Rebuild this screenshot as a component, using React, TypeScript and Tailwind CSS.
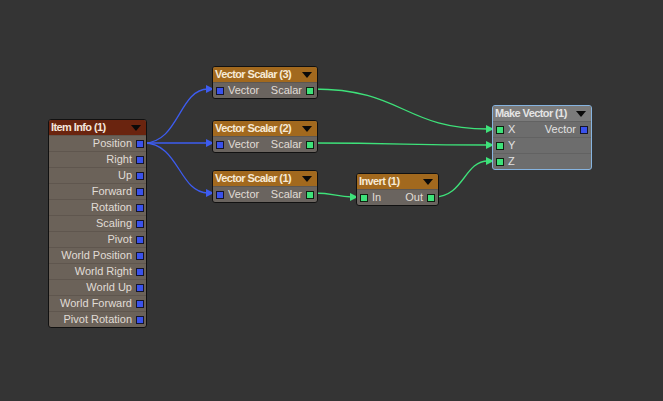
import React from "react";

const FONT = { fontFamily: '"Liberation Sans", Arial, sans-serif' };

function PortBox({ color }: { color: "blue" | "green" }) {
  return (
    <span
      className={
        color === "blue"
          ? "inline-block w-[8px] h-[8px] border border-[#15152a] bg-[#3a52ec] shrink-0"
          : "inline-block w-[8px] h-[8px] border border-[#102010] bg-[#3ee27a] shrink-0"
      }
    />
  );
}

function Triangle() {
  return (
    <svg width="10" height="6" viewBox="0 0 10 6" className="shrink-0">
      <polygon points="0,0 10,0 5,6" fill="#0a0a0a" />
    </svg>
  );
}

function ItemInfo() {
  const rows = [
    "Position",
    "Right",
    "Up",
    "Forward",
    "Rotation",
    "Scaling",
    "Pivot",
    "World Position",
    "World Right",
    "World Up",
    "World Forward",
    "Pivot Rotation",
  ];
  return (
    <div className="absolute left-[48px] top-[119px] w-[99px] border border-[#111] rounded-[3px] overflow-hidden bg-[#6b6259]">
      <div className="h-[15px] bg-[#6a240f] flex items-center justify-between pl-[2px] pr-[5px]">
        <span className="text-[11px] font-bold text-[#f3e6dc] tracking-[-0.6px] leading-none" style={FONT}>
          Item Info (1)
        </span>
        <Triangle />
      </div>
      {rows.map((r) => (
        <div
          key={r}
          className="h-[16px] flex items-center justify-end gap-[4px] pr-[2px] border-t border-[#5f564e]"
        >
          <span className="text-[11px] text-[#e0dcd6] leading-none" style={FONT}>
            {r}
          </span>
          <PortBox color="blue" />
        </div>
      ))}
    </div>
  );
}

function VectorScalar({ left, top, n }: { left: number; top: number; n: number }) {
  return (
    <div
      className="absolute w-[106px] border border-[#111] rounded-[3px] overflow-hidden bg-[#6a645f]"
      style={{ left, top }}
    >
      <div className="h-[15px] bg-[#a2691e] flex items-center justify-between pl-[2px] pr-[5px]">
        <span className="text-[11px] font-bold text-[#f6ead6] tracking-[-0.6px] leading-none" style={FONT}>
          Vector Scalar ({n})
        </span>
        <Triangle />
      </div>
      <div className="h-[16px] flex items-center justify-between px-[3px] border-t border-[#5c5752]">
        <div className="flex items-center gap-[4px]">
          <PortBox color="blue" />
          <span className="text-[11px] text-[#e0dcd6] leading-none" style={FONT}>
            Vector
          </span>
        </div>
        <div className="flex items-center gap-[4px]">
          <span className="text-[11px] text-[#e0dcd6] leading-none" style={FONT}>
            Scalar
          </span>
          <PortBox color="green" />
        </div>
      </div>
    </div>
  );
}

function Invert() {
  return (
    <div className="absolute left-[356px] top-[173px] w-[83px] border border-[#111] rounded-[3px] overflow-hidden bg-[#6a645f]">
      <div className="h-[15px] bg-[#a2691e] flex items-center justify-between pl-[2px] pr-[5px]">
        <span className="text-[11px] font-bold text-[#f6ead6] tracking-[-0.6px] leading-none" style={FONT}>
          Invert (1)
        </span>
        <Triangle />
      </div>
      <div className="h-[16px] flex items-center justify-between px-[3px] border-t border-[#5c5752]">
        <div className="flex items-center gap-[4px]">
          <PortBox color="green" />
          <span className="text-[11px] text-[#e0dcd6] leading-none" style={FONT}>
            In
          </span>
        </div>
        <div className="flex items-center gap-[4px]">
          <span className="text-[11px] text-[#e0dcd6] leading-none" style={FONT}>
            Out
          </span>
          <PortBox color="green" />
        </div>
      </div>
    </div>
  );
}

function MakeVector() {
  const rows = ["X", "Y", "Z"];
  return (
    <div className="absolute left-[492px] top-[105px] w-[100px] border border-[#86b4e0] rounded-[3px] overflow-hidden bg-[#6d6d6d]">
      <div className="h-[15px] bg-[#7b7b7b] flex items-center justify-between pl-[2px] pr-[5px]">
        <span className="text-[11px] font-bold text-[#e4e4e4] tracking-[-0.6px] leading-none" style={FONT}>
          Make Vector (1)
        </span>
        <Triangle />
      </div>
      {rows.map((r, i) => (
        <div
          key={r}
          className="h-[16px] flex items-center justify-between px-[3px] border-t border-[#626262]"
        >
          <div className="flex items-center gap-[4px]">
            <PortBox color="green" />
            <span className="text-[11px] text-[#e2e2e2] leading-none" style={FONT}>
              {r}
            </span>
          </div>
          {i === 0 && (
            <div className="flex items-center gap-[4px]">
              <span className="text-[11px] text-[#e2e2e2] leading-none" style={FONT}>
                Vector
              </span>
              <PortBox color="blue" />
            </div>
          )}
        </div>
      ))}
    </div>
  );
}

function Wire({
  x1,
  y1,
  x2,
  y2,
  color,
  k = 0.5,
}: {
  x1: number;
  y1: number;
  x2: number;
  y2: number;
  color: string;
  k?: number;
}) {
  const dx = Math.max(20, (x2 - x1) * k);
  const d = `M ${x1} ${y1} C ${x1 + dx} ${y1}, ${x2 - dx} ${y2}, ${x2 - 6} ${y2}`;
  return (
    <g>
      <path d={d} stroke={color} strokeWidth="1.3" fill="none" />
      <polygon points={`${x2 - 8},${y2 - 4} ${x2},${y2} ${x2 - 8},${y2 + 4}`} fill={color} />
    </g>
  );
}

export default function App() {
  const blue = "#3d5cf0";
  const green = "#3ee27a";
  return (
    <div className="relative w-[663px] h-[401px] bg-[#343434] overflow-hidden">
      <svg className="absolute left-0 top-0" width="663" height="401">
        <Wire x1={144} y1={143} x2={214} y2={89} color={blue} />
        <Wire x1={144} y1={143} x2={214} y2={143} color={blue} />
        <Wire x1={144} y1={143} x2={214} y2={193} color={blue} />
        <Wire x1={313} y1={89} x2={494} y2={129} color={green} />
        <Wire x1={313} y1={143} x2={494} y2={145} color={green} />
        <Wire x1={313} y1={193} x2={358} y2={197} color={green} />
        <Wire x1={434} y1={197} x2={494} y2={161} color={green} />
      </svg>
      <ItemInfo />
      <VectorScalar left={212} top={66} n={3} />
      <VectorScalar left={212} top={120} n={2} />
      <VectorScalar left={212} top={170} n={1} />
      <Invert />
      <MakeVector />
    </div>
  );
}
